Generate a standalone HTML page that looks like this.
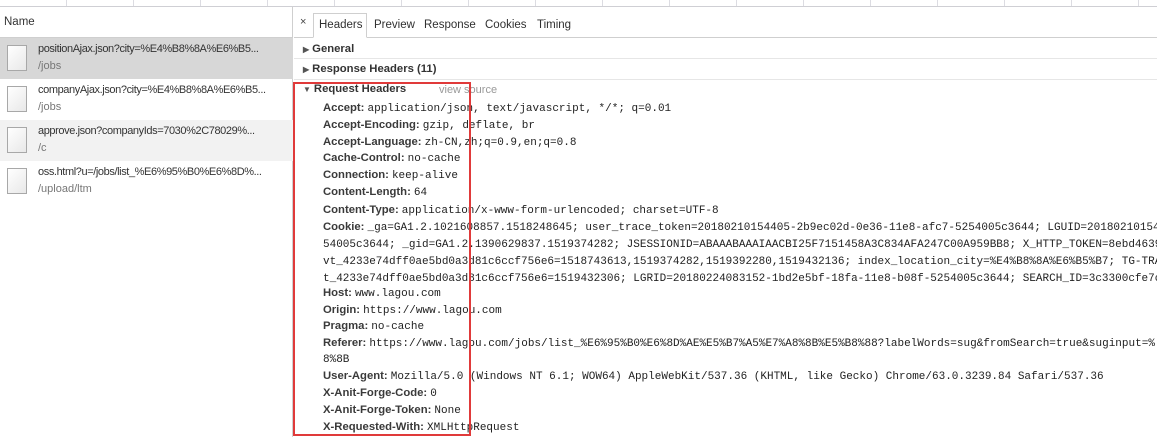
<!DOCTYPE html>
<html><head><meta charset="utf-8">
<style>
*{margin:0;padding:0;box-sizing:border-box}
body{width:1157px;height:437px;overflow:hidden;background:#fff;font-family:"Liberation Sans",sans-serif;font-size:11px;color:#303030;position:relative}
.a{position:absolute;white-space:nowrap}
.top{position:absolute;left:0;top:0;width:1157px;height:7px;border-bottom:1px solid #cfcfd4;background:repeating-linear-gradient(90deg,transparent 0,transparent 66px,#dcdce2 66px,#dcdce2 67px)}
.left{position:absolute;left:0;top:7px;width:293px;height:430px;border-right:1px solid #cfcfcf}
.row{position:absolute;left:0;width:293px;height:41px}
.ic{position:absolute;left:7px;top:7px;width:20px;height:26px;border:1px solid #a8a8a8;background:linear-gradient(135deg,#fff,#e8e8e8);}
.n1{position:absolute;left:38px;top:5px;font-size:11px;letter-spacing:-0.4px;color:#333}
.n2{position:absolute;left:38px;top:22px;font-size:11px;color:#777}
.k{font-weight:bold;color:#3a3a3a;font-size:11.3px}
.v{font-family:"Liberation Mono",monospace;font-size:11px;color:#222}
.L{position:absolute;left:323px;white-space:nowrap;line-height:14px}
.sec{position:absolute;left:303px;font-weight:bold;font-size:11.3px;color:#333;white-space:nowrap}
.tri{font-size:8px;color:#555;margin-right:3px}
</style></head><body>
<div class="top"></div>
<div class="left">
 <div class="a" style="left:4px;top:9px;font-size:11.5px;color:#333">Name</div>
 <div style="position:absolute;left:0;top:30px;width:293px;border-top:1px solid #cfcfcf"></div>
 <div class="row" style="top:31px;background:#d7d7d7"><div class="ic"></div><div class="n1">positionAjax.json?city=%E4%B8%8A%E6%B5...</div><div class="n2">/jobs</div></div>
 <div class="row" style="top:72px"><div class="ic"></div><div class="n1">companyAjax.json?city=%E4%B8%8A%E6%B5...</div><div class="n2">/jobs</div></div>
 <div class="row" style="top:113px;background:#f2f2f2"><div class="ic"></div><div class="n1">approve.json?companyIds=7030%2C78029%...</div><div class="n2">/c</div></div>
 <div class="row" style="top:154px"><div class="ic"></div><div class="n1">oss.html?u=/jobs/list_%E6%95%B0%E6%8D%...</div><div class="n2">/upload/ltm</div></div>
</div>
<div style="position:absolute;left:294px;top:37px;width:863px;border-top:1px solid #cfcfcf"></div>
<div class="a" style="left:300px;top:16px;font-size:11px;color:#444">×</div>
<div style="position:absolute;left:313px;top:13px;width:54px;height:25px;border:1px solid #cfcfcf;border-bottom:1px solid #fff;background:#fff"></div>
<div class="a" style="left:319px;top:19px;font-size:11.5px">Headers</div>
<div class="a" style="left:374px;top:19px;font-size:11.5px">Preview</div>
<div class="a" style="left:424px;top:19px;font-size:11.5px">Response</div>
<div class="a" style="left:485px;top:19px;font-size:11.5px">Cookies</div>
<div class="a" style="left:537px;top:19px;font-size:11.5px">Timing</div>
<div style="position:absolute;left:294px;top:58px;width:863px;border-top:1px solid #e6e6e6"></div>
<div style="position:absolute;left:294px;top:79px;width:863px;border-top:1px solid #e6e6e6"></div>
<div class="sec" style="top:43px"><span class="tri">▶</span>General</div>
<div class="sec" style="top:63px"><span class="tri">▶</span>Response Headers (11)</div>
<div class="sec" style="top:83px"><span class="tri">▼</span>Request Headers</div>
<div class="a" style="left:439px;top:84px;color:#999;font-size:11px">view source</div>

<div class="L" style="top:101px"><span class="k">Accept:</span> <span class="v">application/json, text/javascript, */*; q=0.01</span></div>
<div class="L" style="top:118px"><span class="k">Accept-Encoding:</span> <span class="v">gzip, deflate, br</span></div>
<div class="L" style="top:135px"><span class="k">Accept-Language:</span> <span class="v">zh-CN,zh;q=0.9,en;q=0.8</span></div>
<div class="L" style="top:151px"><span class="k">Cache-Control:</span> <span class="v">no-cache</span></div>
<div class="L" style="top:168px"><span class="k">Connection:</span> <span class="v">keep-alive</span></div>
<div class="L" style="top:185px"><span class="k">Content-Length:</span> <span class="v">64</span></div>
<div class="L" style="top:203px"><span class="k">Content-Type:</span> <span class="v">application/x-www-form-urlencoded; charset=UTF-8</span></div>
<div class="L" style="top:220px"><span class="k">Cookie:</span> <span class="v">_ga=GA1.2.1021608857.1518248645; user_trace_token=20180210154405-2b9ec02d-0e36-11e8-afc7-5254005c3644; LGUID=20180210154</span></div>
<div class="L" style="top:237px"><span class="v">54005c3644; _gid=GA1.2.1390629837.1519374282; JSESSIONID=ABAAABAAAIAACBI25F7151458A3C834AFA247C00A959BB8; X_HTTP_TOKEN=8ebd4639</span></div>
<div class="L" style="top:254px"><span class="v">vt_4233e74dff0ae5bd0a3d81c6ccf756e6=1518743613,1519374282,1519392280,1519432136; index_location_city=%E4%B8%8A%E6%B5%B7; TG-TRA</span></div>
<div class="L" style="top:271px"><span class="v">t_4233e74dff0ae5bd0a3d81c6ccf756e6=1519432306; LGRID=20180224083152-1bd2e5bf-18fa-11e8-b08f-5254005c3644; SEARCH_ID=3c3300cfe7c</span></div>
<div class="L" style="top:286px"><span class="k">Host:</span> <span class="v">www.lagou.com</span></div>
<div class="L" style="top:303px"><span class="k">Origin:</span> <span class="v">https://www.lagou.com</span></div>
<div class="L" style="top:319px"><span class="k">Pragma:</span> <span class="v">no-cache</span></div>
<div class="L" style="top:336px"><span class="k">Referer:</span> <span class="v">https://www.lagou.com/jobs/list_%E6%95%B0%E6%8D%AE%E5%B7%A5%E7%A8%8B%E5%B8%88?labelWords=sug&amp;fromSearch=true&amp;suginput=%</span></div>
<div class="L" style="top:352px"><span class="v">8%8B</span></div>
<div class="L" style="top:369px"><span class="k">User-Agent:</span> <span class="v">Mozilla/5.0 (Windows NT 6.1; WOW64) AppleWebKit/537.36 (KHTML, like Gecko) Chrome/63.0.3239.84 Safari/537.36</span></div>
<div class="L" style="top:386px"><span class="k">X-Anit-Forge-Code:</span> <span class="v">0</span></div>
<div class="L" style="top:403px"><span class="k">X-Anit-Forge-Token:</span> <span class="v">None</span></div>
<div class="L" style="top:420px"><span class="k">X-Requested-With:</span> <span class="v">XMLHttpRequest</span></div>

<div style="position:absolute;left:293px;top:82px;width:178px;height:354px;border:2px solid #e03a3a"></div>
</body></html>
